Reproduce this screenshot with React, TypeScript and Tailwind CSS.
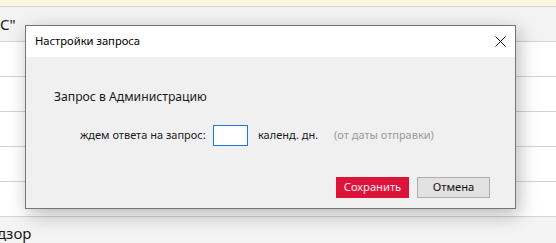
import React from "react";

const rows = ["С\"", "", "", "", "", ""];

const CloseIcon = () => (
  <svg width="11" height="11" viewBox="0 0 11 11" className="block">
    <path d="M0.5 0.5 L10.5 10.5 M10.5 0.5 L0.5 10.5" stroke="#111" strokeWidth="1" fill="none" />
  </svg>
);

const RequestSettings = () => {
  return (
    <div className="absolute left-[25px] top-[25px] w-[491px] h-[184px] flex flex-col border border-[#767676] bg-[#f0f0f0] shadow-[3px_6px_18px_rgba(0,0,0,0.28)]">
      <div className="h-[31px] flex items-center justify-between bg-white pl-[9px] pr-[9px] text-[11.2px] text-black">
        <span>Настройки запроса</span>
        <CloseIcon />
      </div>
      <div className="flex-1 flex flex-col pl-[28px] pr-[25px]">
        <div className="mt-[30px] h-[20px] leading-[20px] text-[12.2px] text-[#1a1a1a]">Запрос в Администрацию</div>
        <div className="mt-[18px] flex items-center text-[11px] text-[#1a1a1a]">
          <span className="ml-[26px] w-[123px] text-right whitespace-nowrap">ждем ответа на запрос:</span>
          <input type="text" className="ml-[10px] w-[35px] h-[21px] border border-[#1f78d1] bg-white outline-none" />
          <span className="ml-[10px] w-[57px] whitespace-nowrap">календ. дн.</span>
          <span className="ml-[19px] whitespace-nowrap text-[#9a9a9a]">(от даты отправки)</span>
        </div>
        <div className="mt-auto mb-[10px] flex justify-end gap-[8px] text-[11.2px]">
          <button className="w-[73px] h-[21px] bg-[#dc143c] text-[#fbe4ea]">Сохранить</button>
          <button className="w-[73px] h-[21px] bg-[#e1e1e1] border border-[#adadad] text-[#111]">Отмена</button>
        </div>
      </div>
    </div>
  );
};

export default function App() {
  return (
    <div className="relative w-[556px] h-[243px] overflow-hidden bg-[#f5f4f5] font-['Noto_Sans',sans-serif]">
      <div className="h-[7px] bg-[#fdf7e1] border-b border-[#d3d3d3]" />
      {rows.map((text, i) => (
        <div
          key={i}
          className={
            i === 0
              ? "h-[35px] flex items-center border-b border-[#d3d3d3] bg-[#f3f3f3] text-[15px] text-[#1a1a1a]"
              : "h-[35px] flex items-center border-b border-[#d3d3d3] bg-white text-[15px] text-[#1a1a1a]"
          }
        >
          {text}
        </div>
      ))}
      <div className="h-[26px] flex items-end text-[15px] text-[#1a1a1a] leading-[19px]">
        <span className="ml-[-3px]">дзор</span>
      </div>
      <RequestSettings />
    </div>
  );
}
